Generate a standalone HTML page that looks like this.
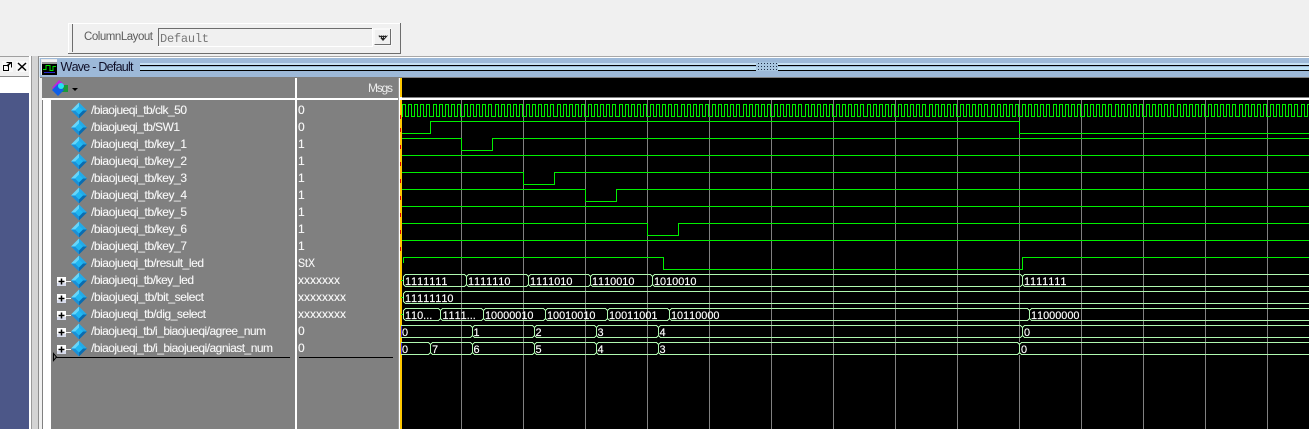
<!DOCTYPE html>
<html><head><meta charset="utf-8"><title>Wave - Default</title>
<style>
html,body{margin:0;padding:0;background:#f0f0f0;width:1309px;height:429px;overflow:hidden}
svg{display:block}
text{font-family:"Liberation Sans",sans-serif;white-space:pre;font-kerning:none}
.n text{font-size:12px;fill:#f8f8f8;stroke:#f8f8f8;stroke-width:.12px}
.b text{font-size:10.9px;fill:#fff;stroke:#fff;stroke-width:.15px}
.w path{fill:none;stroke:#00f000;stroke-width:1;shape-rendering:crispEdges}
</style></head><body>
<svg width="1309" height="429" viewBox="0 0 1309 429" xmlns="http://www.w3.org/2000/svg">
<defs>
<path id="c" d="M0 12.500H.5V.5H3.500V12.500H6.500V.5H9.500V12.500H12.500V.5H15.500V12.500H18.500V.5H21.500V12.500H24.500V.5H27.500V12.500H31" fill="none" stroke="#00f000" shape-rendering="crispEdges"/>
<g id="d">
<path d="M-8 0L0-8V0Z" fill="#66d6fb"/>
<path d="M8 0L0-8V0Z" fill="#22aae8"/>
<path d="M-8 0L0 8V0Z" fill="#1a90d8"/>
<path d="M8 0L0 8V0Z" fill="#0a6cb0"/>
<path d="M-4 0L0-4L4 0L0 4Z" fill="#20b8f2"/>
</g>
<g id="p">
<rect x="0" y="0" width="9" height="9" fill="#fff"/>
<rect x="0" y="6" width="9" height="3" fill="#d8dcec"/>
<path d="M1.500 4.500H7.500M4.500 1.500V7.500" stroke="#000" stroke-width="1.500"/>
<path d="M9 4.500H14" stroke="#f4f4f4" shape-rendering="crispEdges"/>
</g>
<g id="t" shape-rendering="crispEdges">
<path d="M-1 .5H2M-1 12.500H2" stroke="#000"/>
<path d="M-1.500 .5L.5 2.500V10.500L-1.500 12.500M2.500 .5L.5 2.500M.5 10.500L2.500 12.500" fill="none" stroke="#b0f8b0"/>
</g>
<g id="s" shape-rendering="crispEdges">
<path d="M-1 .5H2M-1 12.500H2" stroke="#000"/>
<path d="M2.500 .5L.5 2.500V10.500L2.500 12.500" fill="none" stroke="#b0f8b0"/>
</g>
</defs>

<rect width="1309" height="429" fill="#f0f0f0"/>

<!-- toolbar -->
<path d="M68 23.500H400" stroke="#fff" shape-rendering="crispEdges"/>
<path d="M68.500 23V54" stroke="#fff" shape-rendering="crispEdges"/>
<path d="M72.500 24V52" stroke="#6d6d6d" shape-rendering="crispEdges"/>
<path d="M68 53.500H401M400.500 23V54" stroke="#6d6d6d" shape-rendering="crispEdges"/>
<text x="84" y="40" font-size="11.500" fill="#5c5c5c" textLength="69">ColumnLayout</text>
<path d="M158.500 46V28.500H372" fill="none" stroke="#6d6d6d" shape-rendering="crispEdges"/>
<path d="M158 46.500H372.500V28" fill="none" stroke="#fff" shape-rendering="crispEdges"/>
<text x="160" y="42" style="font-family:'Liberation Mono',monospace" font-size="12" fill="#777" textLength="49">Default</text>
<rect x="374" y="29" width="17" height="16" fill="#f0f0f0" stroke="#fff"/>
<path d="M374.500 44.500H390.500V29" fill="none" stroke="#6d6d6d" shape-rendering="crispEdges"/>
<path d="M378 35.500H388L383 41Z" fill="#222"/>
<path d="M378 35.500H388M380 37.500H386" stroke="#ccc" stroke-dasharray="1 1" shape-rendering="crispEdges"/>

<!-- left dock -->
<path d="M0 56.500H30" stroke="#a0a0a0" shape-rendering="crispEdges"/>
<rect x="2" y="61" width="11" height="11" fill="#f8f8f8"/>
<rect x="16" y="61" width="12" height="11" fill="#f8f8f8"/>
<path d="M3.500 65.500H8.500V70.500H3.500ZM6.500 62.500H11.500V67.500" fill="none" stroke="#000" shape-rendering="crispEdges"/>
<path d="M7 66L11 62.500" stroke="#000" stroke-width="1.500"/>
<path d="M18 63L26 70.500M26 63L18 70.500" stroke="#000" stroke-width="1.500"/>
<path d="M0 76.500H29" stroke="#8a8a8a" shape-rendering="crispEdges"/>
<rect x="0" y="77" width="29" height="16" fill="#fff"/>
<rect x="0" y="93" width="29" height="336" fill="#4c5788"/>
<rect x="29" y="56" width="2" height="373" fill="#fff"/>
<rect x="31" y="56" width="1" height="373" fill="#9a9a9a"/>
<rect x="32" y="56" width="6" height="373" fill="#d4d4d4"/>
<rect x="38" y="56" width="1" height="373" fill="#8c8c8c"/>
<rect x="39" y="56" width="3" height="373" fill="#f0f0f0"/>

<!-- title bar -->
<path d="M39 56.500H1309" stroke="#a8a8a8" shape-rendering="crispEdges"/>
<path d="M39 57.500H1309" stroke="#fff" shape-rendering="crispEdges"/>
<rect x="40" y="58" width="1269" height="19" fill="#9db9d8"/>
<rect x="140" y="63" width="1169" height="2" fill="#c6e0f2"/>
<rect x="140" y="65" width="1169" height="1" fill="#000"/>
<rect x="140" y="66" width="1169" height="1" fill="#9db9d8"/>
<rect x="140" y="67" width="1169" height="3" fill="#bfe2f4"/>
<rect x="140" y="70" width="1169" height="1" fill="#000"/>
<rect x="756" y="62" width="22" height="9" fill="#a8c6e0"/>
<path d="M758 63.500H777M758 66.500H777M758 69.500H777" stroke="#20304a" stroke-dasharray="1 2" shape-rendering="crispEdges"/>
<rect x="41" y="59" width="16" height="16" fill="#e8e8e8"/>
<rect x="42" y="60" width="15" height="15" fill="#000"/>
<rect x="42" y="60" width="15" height="2" fill="#f4f4f4"/>
<rect x="42" y="62" width="15" height="2" fill="#9a9a9a"/>
<path d="M43 69.500H46V65.500H50V70.500H53V66.500H56" fill="none" stroke="#00e000" shape-rendering="crispEdges"/>
<path d="M44 72.500H55" stroke="#2a2acc" shape-rendering="crispEdges"/>
<text x="60.500" y="71" font-size="12.500" fill="#101028" textLength="73">Wave - Default</text>
<path d="M39.500 58V77" stroke="#d8e6f2" shape-rendering="crispEdges"/>
<path d="M40 77.500H1309" stroke="#808080" shape-rendering="crispEdges"/>

<!-- name/value panes -->
<rect x="42" y="78" width="356" height="351" fill="#808080"/>
<rect x="42" y="98" width="356" height="2" fill="#fff"/>
<rect x="43" y="100" width="8" height="329" fill="#fff"/>
<rect x="295" y="78" width="2" height="351" fill="#fff"/>
<rect x="398" y="78" width="1" height="351" fill="#9a9a9a"/>
<rect x="399" y="78" width="1" height="351" fill="#fff"/>

<!-- header icon -->
<path d="M52 88L59 80L66 86L60 92Z" fill="#c020e0"/>
<rect x="61" y="85" width="7" height="7" fill="#1a9a3a"/>
<path d="M52 90L58 84L64 90L58 96Z" fill="#1060e8"/>
<circle cx="61" cy="86" r="3" fill="#28e0f0"/>
<path d="M72 88H78L75 91Z" fill="#000"/>
<text x="368" y="92" font-size="12" fill="#ececec" textLength="25">Msgs</text>

<!-- diamonds -->
<use href="#d" x="79" y="110.500"/><use href="#d" x="79" y="127.500"/><use href="#d" x="79" y="144.500"/><use href="#d" x="79" y="161.500"/><use href="#d" x="79" y="178.500"/><use href="#d" x="79" y="195.500"/><use href="#d" x="79" y="212.500"/><use href="#d" x="79" y="229.500"/><use href="#d" x="79" y="246.500"/><use href="#d" x="79" y="263.500"/><use href="#d" x="79" y="280.500"/><use href="#d" x="79" y="297.500"/><use href="#d" x="79" y="314.500"/><use href="#d" x="79" y="331.500"/><use href="#d" x="79" y="348.500"/>
<use href="#p" x="57" y="277"/><use href="#p" x="57" y="294"/><use href="#p" x="57" y="311"/><use href="#p" x="57" y="328"/><use href="#p" x="57" y="345"/>

<g class="n">
<text x="91" y="114" textLength="96">/biaojueqi_tb/clk_50</text>
<text x="91" y="131" textLength="89">/biaojueqi_tb/SW1</text>
<text x="91" y="148" textLength="96">/biaojueqi_tb/key_1</text>
<text x="91" y="165" textLength="96">/biaojueqi_tb/key_2</text>
<text x="91" y="182" textLength="96">/biaojueqi_tb/key_3</text>
<text x="91" y="199" textLength="96">/biaojueqi_tb/key_4</text>
<text x="91" y="216" textLength="96">/biaojueqi_tb/key_5</text>
<text x="91" y="233" textLength="96">/biaojueqi_tb/key_6</text>
<text x="91" y="250" textLength="96">/biaojueqi_tb/key_7</text>
<text x="91" y="267" textLength="113">/biaojueqi_tb/result_led</text>
<text x="91" y="284" textLength="103">/biaojueqi_tb/key_led</text>
<text x="91" y="301" textLength="113">/biaojueqi_tb/bit_select</text>
<text x="91" y="318" textLength="115">/biaojueqi_tb/dig_select</text>
<text x="91" y="335" textLength="175">/biaojueqi_tb/i_biaojueqi/agree_num</text>
<text x="91" y="352" textLength="182">/biaojueqi_tb/i_biaojueqi/agniast_num</text>
<text x="298" y="114">0</text>
<text x="298" y="131">0</text>
<text x="298" y="148">1</text>
<text x="298" y="165">1</text>
<text x="298" y="182">1</text>
<text x="298" y="199">1</text>
<text x="298" y="216">1</text>
<text x="298" y="233">1</text>
<text x="298" y="250">1</text>
<text x="298" y="267" textLength="17" lengthAdjust="spacingAndGlyphs">StX</text>
<text x="298" y="284" textLength="42">xxxxxxx</text>
<text x="298" y="301" textLength="48">xxxxxxxx</text>
<text x="298" y="318" textLength="48">xxxxxxxx</text>
<text x="298" y="335">0</text>
<text x="298" y="352">0</text>
</g>
<path d="M54 357.500H290M299 357.500H393" stroke="#000" shape-rendering="crispEdges"/>
<path d="M53.500 353.500V360.500L56.500 357Z" fill="#808080" stroke="#000" stroke-width="1"/>

<!-- wave window -->
<rect x="400" y="78" width="909" height="351" fill="#000"/>
<rect x="400" y="97" width="909" height="1" fill="#808080"/>
<rect x="400" y="98" width="909" height="2" fill="#fff"/>
<path d="M461.500 100V429M523.500 100V429M585.500 100V429M647.500 100V429M709.500 100V429M771.500 100V429M833.500 100V429M895.500 100V429M957.500 100V429M1019.500 100V429M1081.500 100V429M1143.500 100V429M1205.500 100V429M1267.500 100V429" stroke="#808080" shape-rendering="crispEdges"/>
<rect x="400" y="78" width="2" height="351" fill="#ffc800"/>
<rect x="400" y="97" width="2" height="3" fill="#fff"/>
<path d="M400.500 115V119" stroke="#e00000" shape-rendering="crispEdges"/>
<path d="M400.500 128V262" stroke="#e00000" stroke-dasharray="4 13" shape-rendering="crispEdges"/>

<use href="#c" x="402" y="104"/><use href="#c" x="433" y="104"/><use href="#c" x="464" y="104"/><use href="#c" x="495" y="104"/><use href="#c" x="526" y="104"/><use href="#c" x="557" y="104"/><use href="#c" x="588" y="104"/><use href="#c" x="619" y="104"/><use href="#c" x="650" y="104"/><use href="#c" x="681" y="104"/><use href="#c" x="712" y="104"/><use href="#c" x="743" y="104"/><use href="#c" x="774" y="104"/><use href="#c" x="805" y="104"/><use href="#c" x="836" y="104"/><use href="#c" x="867" y="104"/><use href="#c" x="898" y="104"/><use href="#c" x="929" y="104"/><use href="#c" x="960" y="104"/><use href="#c" x="991" y="104"/><use href="#c" x="1022" y="104"/><use href="#c" x="1053" y="104"/><use href="#c" x="1084" y="104"/><use href="#c" x="1115" y="104"/><use href="#c" x="1146" y="104"/><use href="#c" x="1177" y="104"/><use href="#c" x="1208" y="104"/><use href="#c" x="1239" y="104"/><use href="#c" x="1270" y="104"/><use href="#c" x="1301" y="104"/>
<g class="w">
<path d="M402 133.500H430.500V121.500H1019.500V133.500H1309"/>
<path d="M402 138.500H461.500V150.500H492.500V138.500H1309"/>
<path d="M402 155.500H1309"/>
<path d="M402 172.500H523.500V184.500H554.500V172.500H1309"/>
<path d="M402 189.500H585.500V201.500H616.500V189.500H1309"/>
<path d="M402 206.500H1309"/>
<path d="M402 223.500H647.500V235.500H678.500V223.500H1309"/>
<path d="M402 240.500H1309"/>
<path d="M403.500 263V257.500H663.500V269.500H1022.500V257.500H1309"/>
<path d="M401 280.500H403M401 297.500H403M401 314.500H403"/>
</g>
<path d="M403 274.500H1309M403 286.500H1309M403 291.500H1309M403 303.500H1309M403 308.500H1309M403 320.500H1309M401 325.500H1309M401 337.500H1309M401 342.500H1309M401 354.500H1309" stroke="#b0f8b0" shape-rendering="crispEdges"/>
<path d="M401.500 326V337M401.500 343V354" stroke="#4a30e0" shape-rendering="crispEdges"/>

<use href="#s" x="403" y="274"/><use href="#t" x="466" y="274"/><use href="#t" x="528" y="274"/><use href="#t" x="590" y="274"/><use href="#t" x="652" y="274"/><use href="#t" x="1022" y="274"/>
<use href="#s" x="403" y="291"/>
<use href="#s" x="403" y="308"/><use href="#t" x="440" y="308"/><use href="#t" x="483" y="308"/><use href="#t" x="545" y="308"/><use href="#t" x="607" y="308"/><use href="#t" x="669" y="308"/><use href="#t" x="1029" y="308"/>
<use href="#t" x="472" y="325"/><use href="#t" x="534" y="325"/><use href="#t" x="596" y="325"/><use href="#t" x="658" y="325"/><use href="#t" x="1022" y="325"/>
<use href="#t" x="430" y="342"/><use href="#t" x="472" y="342"/><use href="#t" x="534" y="342"/><use href="#t" x="596" y="342"/><use href="#t" x="658" y="342"/><use href="#t" x="1019" y="342"/>

<g class="b">
<text x="405" y="285">1111111</text><text x="468" y="285">1111110</text><text x="530" y="285">1111010</text><text x="592" y="285">1110010</text><text x="654" y="285">1010010</text><text x="1024" y="285">1111111</text>
<text x="405" y="302">11111110</text>
<text x="405" y="319">110...</text><text x="442.500" y="319">1111...</text><text x="485" y="319">10000010</text><text x="547" y="319">10010010</text><text x="609" y="319">10011001</text><text x="671" y="319">10110000</text><text x="1031" y="319">11000000</text>
<text x="402" y="336">0</text><text x="473.500" y="336">1</text><text x="535.500" y="336">2</text><text x="597.500" y="336">3</text><text x="659.500" y="336">4</text><text x="1024" y="336">0</text>
<text x="402" y="353">0</text><text x="432" y="353">7</text><text x="473.500" y="353">6</text><text x="535.500" y="353">5</text><text x="597.500" y="353">4</text><text x="659.500" y="353">3</text><text x="1021" y="353">0</text>
</g>
</svg>
</body></html>
